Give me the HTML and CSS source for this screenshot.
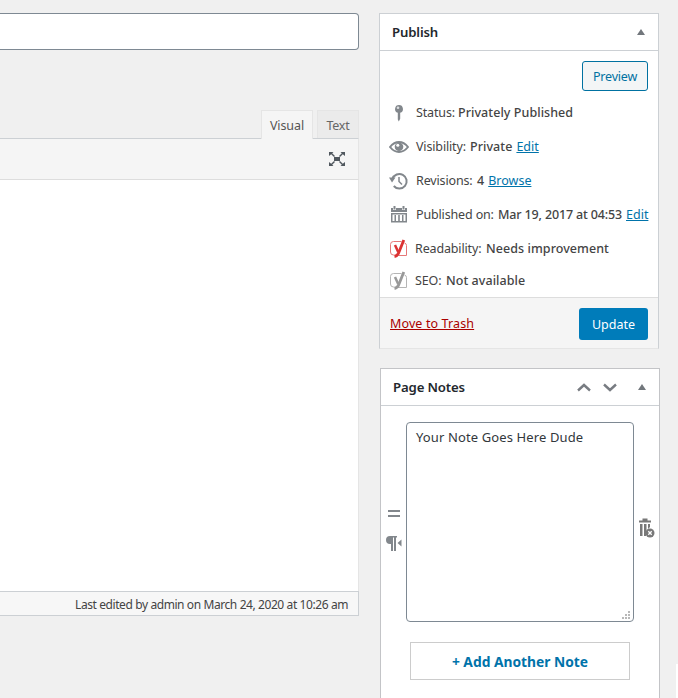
FILE: index.html
```html
<!DOCTYPE html>
<html lang="en">
<head>
<meta charset="utf-8">
<title>Edit Page</title>
<link rel="stylesheet" href="styles.css">
</head>
<body>
<div class="page">
  <main class="editor">
    <div class="title-field"></div>
    <div class="tabs">
      <div class="tab active"><span>Visual</span></div>
      <div class="tab"><span>Text</span></div>
    </div>
    <div class="toolbar">
      <svg width="18" height="16" viewBox="0 0 18 16" fill="#50575e"><path d="M1 1h4.500L4.200 2.300 7 5 6 6 3.200 3.300 1 5zM17 1h-4.500l1.300 1.300L11 5l1 1 2.800-2.700L17 5zM1 15h4.500l-1.300-1.300L7 11l-1-1-2.800 2.700L1 11zM17 15h-4.500l1.300-1.300L11 11l1-1 2.800 2.700L17 11zM6 6h6v4H6z"/></svg>
    </div>
    <div class="canvas"></div>
    <div class="statusbar"><span class="edited">Last edited by admin on March 24, 2020 at 10:26 am</span></div>
  </main>
  <aside class="side">
    <section class="box publish">
      <header class="box-head"><h2>Publish</h2><i class="toggle"></i></header>
      <div class="preview-row"><a class="preview"><span>Preview</span></a></div>
      <div class="row">
        <svg class="icon" viewBox="0 0 20 20"><path fill="#82878c" d="M10 2a4 4 0 0 1 1.200 7.800v6L9.800 18.500l-1-2V9.800A4 4 0 0 1 10 2z"/><circle cx="9" cy="4.800" r="1.300" fill="#dcdee0"/></svg>
        <span class="label l-status">Status:</span><b>Privately Published</b>
      </div>
      <div class="row">
        <svg class="icon" viewBox="0 0 20 20"><path fill="#fff" d="M0 4h20v12H0z"/><path d="M1 10q4-5 9-5t9 5q-4 5-9 5t-9-5z" fill="none" stroke="#82878c" stroke-width="2"/><circle cx="10" cy="9.700" r="4.300" fill="#82878c"/><circle cx="8.800" cy="8.300" r="1.500" fill="#fff"/></svg>
        <span class="label l-vis">Visibility:</span><b>Private</b><a>Edit</a>
      </div>
      <div class="row">
        <svg class="icon" viewBox="0 0 20 20"><path d="M3.400 8A7.300 7.300 0 1 1 4.800 15" fill="none" stroke="#82878c" stroke-width="2"/><path fill="#82878c" d="M0 6.500h6.500L3 11.500z"/><path d="M10 6v4.500l3 3" fill="none" stroke="#82878c" stroke-width="1.500"/></svg>
        <span class="label l-rev">Revisions:</span><b>4</b><a>Browse</a>
      </div>
      <div class="row">
        <svg class="icon" viewBox="0 0 20 20" fill="#82878c"><path d="M2 3h2v2h3V3h6v2h3V3h2v4H2zM4.500 1h2v3.500h-2zM13.500 1h2v3.500h-2zM2 8h16v1.500H2zM2 16h16v1.500H2zM2 9h1.500v8H2zM16.500 9H18v8h-1.500zM5.500 10H7v6H5.500zM9.200 10h1.600v6H9.200zM13 10h1.500v6H13z"/></svg>
        <span class="label l-pub">Published on:</span><b class="v-pub">Mar 19, 2017 at 04:53</b><a>Edit</a>
      </div>
      <div class="row yoast">
        <svg class="icon" viewBox="0 0 20 20" fill="none" stroke="#dc3232"><path stroke="#e67878" d="M12.500 2.500H4.500a3 3 0 0 0-3 3V13a3 3 0 0 0 3 3h1M15.500 4q2 .5 2 2.500v10H9"/><path stroke-width="2.500" d="M6 6 9.200 13"/><path stroke-width="2.800" d="M14.800 1 9.800 13.500Q8.500 17 5.500 17.500"/></svg>
        <span class="label l-read">Readability:</span><b>Needs improvement</b>
      </div>
      <div class="row yoast seo">
        <svg class="icon" viewBox="0 0 20 20" fill="none" stroke="#999"><path stroke="#b5b5b5" d="M12.500 2.500H4.500a3 3 0 0 0-3 3V13a3 3 0 0 0 3 3h1M15.500 4q2 .5 2 2.500v10H9"/><path stroke-width="2.500" d="M6 6 9.200 13"/><path stroke-width="2.800" d="M14.800 1 9.800 13.500Q8.500 17 5.500 17.500"/></svg>
        <span class="label l-seo">SEO:</span><b>Not available</b>
      </div>
      <footer class="actions"><a class="trash">Move to Trash</a><a class="update"><span>Update</span></a></footer>
    </section>
    <section class="box notes">
      <header class="box-head"><h2>Page Notes</h2>
        <svg class="order" width="42" height="12" viewBox="0 0 42 12" fill="none" stroke="#787c82" stroke-width="2.400"><path d="M2 9.500l6-5.500L14 9.500M28 3.500l6 5.500L40 3.500"/></svg>
        <i class="toggle"></i></header>
      <div class="note">
        <div class="handles">
          <svg width="12" height="8" viewBox="0 0 12 8"><path fill="#82878c" d="M0 0h12v2H0zM0 5h12v2H0z"/></svg>
          <svg width="16" height="16" viewBox="0 0 16 16"><path fill="#82878c" d="M4 0h7v1.500h-1V15H8V1.500H7V15H5V8H4a4 4 0 0 1 0-8zM15.500 3.500v7L11.500 7z"/></svg>
        </div>
        <div class="note-text"><span>Your Note Goes Here Dude</span>
          <svg class="grip" width="8" height="8" viewBox="0 0 8 8" fill="#b8b8b8"><path d="M6 0h2v2H6zM3 3h2v2H3zM6 3h2v2H6zM0 6h2v2H0zM3 6h2v2H3zM6 6h2v2H6z"/></svg>
        </div>
        <svg class="bin" width="16" height="20" viewBox="0 0 16 20"><path fill="#787878" d="M0 2.500h3.500V.500h5v2H12v2H0zM1 6h2.500v12H1zM5 6h2.500v9.500L7 18H5zM9 6h2v3L9 11z"/><circle cx="11" cy="15" r="4.500" fill="#787878"/><path d="M9.300 13.300l3.400 3.400m0-3.400l-3.400 3.400" stroke="#fff" stroke-width="1.300"/></svg>
      </div>
      <a class="add"><span>+ Add Another Note</span></a>
    </section>
  </aside>
  <div class="edge"></div>
</div>
</body>
</html>
```

FILE: styles.css
```css
* { box-sizing: border-box; }
body { margin: 0; background: #f0f0f0; font-family: "Noto Sans", "Open Sans", sans-serif; font-size: 12.5px; line-height: 18px; color: #444; overflow: hidden; }
.page { display: grid; grid-template-columns: 359px 281px 1fr; column-gap: 20px; height: 698px; position: relative; }
.page a { color: #0073aa; text-decoration: underline; }
span, b, a, h2 { white-space: nowrap; }
svg { display: block; flex: none; }
b { font-weight: 500; letter-spacing: .06px; }

.editor { padding-top: 13px; display: flex; flex-direction: column; }
.title-field { height: 37px; background: #fff; border: 1px solid #7e8993; border-left: 0; border-radius: 0 4px 4px 0; }
.tabs { display: flex; justify-content: flex-end; gap: 4px; margin-top: 60px; height: 28px; }
.tab { border: 1px solid #e5e5e5; border-bottom: 0; background: #ebebeb; width: 42px; height: 28px; text-align: center; line-height: 30px; color: #666; letter-spacing: -.3px; }
.tab.active { width: 52px; height: 29px; background: #f5f5f5; color: #555; z-index: 1; letter-spacing: -.1px; }
.toolbar { height: 42px; border-top: 1px solid #ccd0d4; border-right: 1px solid #e5e5e5; border-bottom: 1px solid #ddd; background: #f5f5f5; display: flex; justify-content: flex-end; padding: 12px 12px 0 0; }
.canvas { height: 411px; background: #fff; border-right: 1px solid #e5e5e5; }
.statusbar { height: 25px; border: 1px solid #ccd0d4; border-left: 0; background: #f7f7f7; text-align: right; padding-right: 10px; font-size: 12px; line-height: 25px; }
.edited { letter-spacing: -.43px; word-spacing: .1px; }

.side { padding-top: 13px; }
.box { width: 280px; background: #fff; border: 1px solid #ccd0d4; }
.box-head { height: 37px; border-bottom: 1px solid #ccd0d4; display: flex; align-items: center; padding: 0 13px 0 12px; }
h2 { margin: 0; font-size: 13.2px; font-weight: 600; letter-spacing: -.15px; color: #23282d; flex: 1; }
.toggle { border: 4px solid transparent; border-top: 0; border-bottom: 6px solid #72777c; }
.publish { height: 336px; border-bottom-color: #e5e5e5; }
.preview-row { height: 45px; padding: 10px 10px 0; display: flex; justify-content: flex-end; }
.preview-row .preview { width: 66px; height: 30px; border: 1px solid #0071a1; border-radius: 3px; background: #f3f5f6; color: #0071a1; text-align: center; line-height: 29px; text-decoration: none; letter-spacing: -.2px; }
.row { height: 34px; display: flex; align-items: center; padding-left: 9px; white-space: nowrap; }
.row .icon { width: 20px; height: 20px; margin-right: 7px; }
.row.yoast .icon { margin-right: 6px; }
.row.seo { height: 30px; }
.label { flex: none; letter-spacing: -.15px; }
.row b { margin-right: 4px; }
.l-status { width: 42px; }
.l-vis { width: 54px; }
.l-rev { width: 61px; }
.l-pub { width: 82px; }
.l-read { width: 71px; }
.l-seo { width: 31px; }
.v-pub { letter-spacing: -.15px; }
.actions { height: 51px; margin-top: 1px; border-top: 1px solid #ddd; background: #f5f5f5; display: flex; justify-content: space-between; align-items: center; padding: 2px 10px 0; }
.actions .trash { color: #a00; letter-spacing: .12px; }
.actions .update { width: 69px; height: 32px; border-radius: 3px; background: #007cba; color: #fff; text-align: center; line-height: 33px; text-decoration: none; }

.notes { margin: 19px 0 0 1px; height: 340px; border-color: #c3c4c7; }
.order { margin-right: 20px; }
.note { display: flex; height: 200px; margin-top: 16px; }
.handles { width: 25px; padding: 88px 0 0 5px; }
.handles svg:first-child { margin: 0 0 18px 2px; }
.note-text { width: 228px; border: 1px solid #7e8993; border-radius: 4px; padding: 5px 9px; color: #32373c; font-size: 13px; letter-spacing: .12px; position: relative; }
.grip { position: absolute; right: 3px; bottom: 2px; }
.bin { margin: 96px 0 0 5px; }
.notes .add { display: block; width: 220px; height: 38px; margin: 20px 0 0 29px; border: 1px solid #ccc; text-align: center; line-height: 38px; font-size: 13.8px; font-weight: 700; text-decoration: none; }
.edge { position: absolute; right: 0; bottom: 0; width: 2px; height: 34px; background: #fff; }
```
